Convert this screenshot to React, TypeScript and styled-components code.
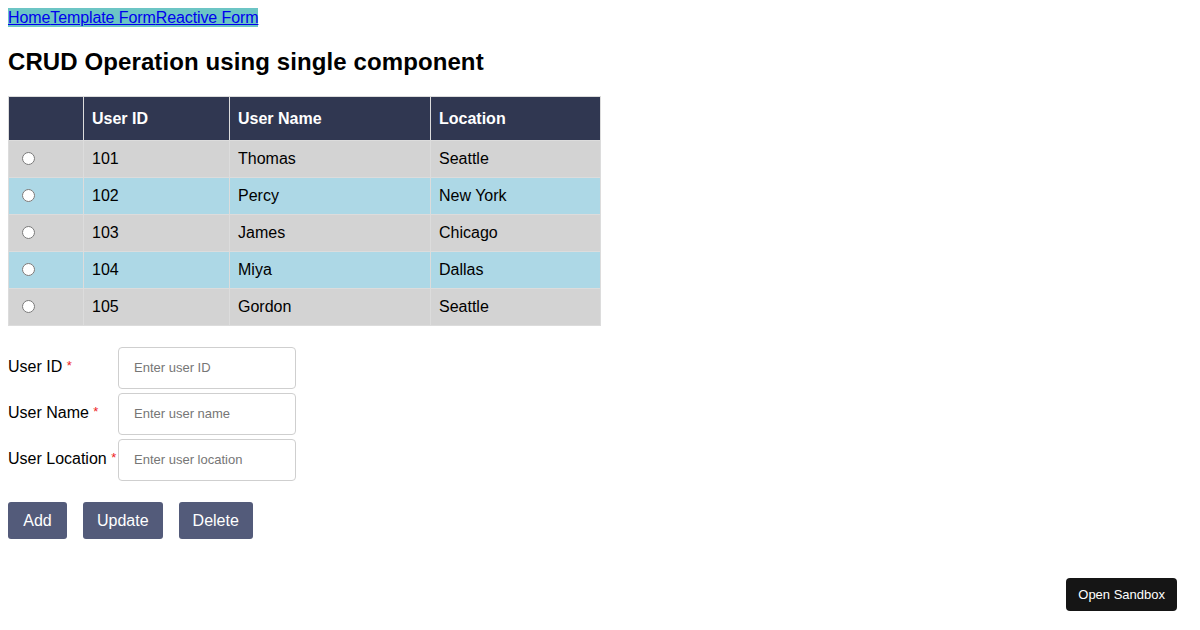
import React from "react";
import styled, { createGlobalStyle } from "styled-components";

const GlobalStyle = createGlobalStyle`
  body {
    margin: 8px;
    font-family: "Liberation Sans", Arial, sans-serif;
    font-size: 16px;
    color: #000;
    background: #fff;
  }
`;

const Nav = styled.nav`
  display: inline-flex;
  background: #6cc5c5;
  line-height: 19px;
`;

const NavLink = styled.a`
  color: #0000ee;
  text-decoration: underline;
  font-size: 16px;
  letter-spacing: -0.1px;
`;

const Title = styled.h2`
  font-size: 24px;
  font-weight: bold;
  margin: 21px 0 20px;
  letter-spacing: 0.1px;
`;

const Table = styled.table`
  width: 50%;
  border-collapse: collapse;
  table-layout: fixed;
`;

const HeadCell = styled.th<{ $w: number }>`
  width: ${(p) => p.$w}px;
  background: #303751;
  color: #fff;
  text-align: left;
  font-weight: bold;
  padding: 0 8px;
  height: 43px;
  border: 1px solid #dcdcdc;
`;

const Row = styled.tr<{ $alt: boolean }>`
  background: ${(p) => (p.$alt ? "#add8e6" : "#d3d3d3")};
`;

const Cell = styled.td`
  padding: 0 8px;
  height: 36px;
  border: 1px solid #dcdcdc;
`;

const Form = styled.form`
  margin-top: 21px;
  display: flex;
  flex-direction: column;
  gap: 4px;
`;

const Field = styled.div`
  display: flex;
  align-items: center;
`;

const Label = styled.label`
  width: 110px;
  margin-top: -2px;
`;

const Star = styled.span`
  color: #ee2222;
  font-size: 13px;
  vertical-align: 2px;
`;

const Input = styled.input`
  box-sizing: border-box;
  width: 178px;
  height: 42px;
  padding: 0 15px 1px;
  border: 1px solid #cfcfcf;
  border-radius: 4px;
  font-family: "Liberation Sans", Arial, sans-serif;
  font-size: 13px;
  &::placeholder {
    color: #767676;
  }
`;

const Actions = styled.div`
  display: flex;
  gap: 16px;
  margin-top: 21px;
`;

const Button = styled.button`
  min-width: 59px;
  height: 37px;
  padding: 0 14px;
  border: none;
  border-radius: 3px;
  background: #535b7a;
  color: #fff;
  font-family: "Liberation Sans", Arial, sans-serif;
  font-size: 16px;
`;

const SandboxButton = styled.button`
  position: fixed;
  right: 23px;
  bottom: 19px;
  height: 33px;
  padding: 0 12px;
  border: none;
  border-radius: 4px;
  background: #151515;
  color: #fff;
  font-family: "Liberation Sans", Arial, sans-serif;
  font-size: 13px;
`;

const users = [
  { id: 101, name: "Thomas", location: "Seattle" },
  { id: 102, name: "Percy", location: "New York" },
  { id: 103, name: "James", location: "Chicago" },
  { id: 104, name: "Miya", location: "Dallas" },
  { id: 105, name: "Gordon", location: "Seattle" },
];

export default function App() {
  return (
    <>
      <GlobalStyle />
      <Nav>
        <NavLink href="#">Home</NavLink>
        <NavLink href="#">Template Form</NavLink>
        <NavLink href="#">Reactive Form</NavLink>
      </Nav>
      <Title>CRUD Operation using single component</Title>
      <Table>
        <thead>
          <tr>
            <HeadCell $w={58} />
            <HeadCell $w={129}>User ID</HeadCell>
            <HeadCell $w={184}>User Name</HeadCell>
            <HeadCell $w={153}>Location</HeadCell>
          </tr>
        </thead>
        <tbody>
          {users.map((u, i) => (
            <Row key={u.id} $alt={i % 2 === 1}>
              <Cell>
                <input type="radio" name="user" />
              </Cell>
              <Cell>{u.id}</Cell>
              <Cell>{u.name}</Cell>
              <Cell>{u.location}</Cell>
            </Row>
          ))}
        </tbody>
      </Table>
      <Form onSubmit={(e) => e.preventDefault()}>
        <Field>
          <Label>
            User ID <Star>*</Star>
          </Label>
          <Input placeholder="Enter user ID" />
        </Field>
        <Field>
          <Label>
            User Name <Star>*</Star>
          </Label>
          <Input placeholder="Enter user name" />
        </Field>
        <Field>
          <Label>
            User Location <Star>*</Star>
          </Label>
          <Input placeholder="Enter user location" />
        </Field>
      </Form>
      <Actions>
        <Button>Add</Button>
        <Button>Update</Button>
        <Button>Delete</Button>
      </Actions>
      <SandboxButton>Open Sandbox</SandboxButton>
    </>
  );
}
